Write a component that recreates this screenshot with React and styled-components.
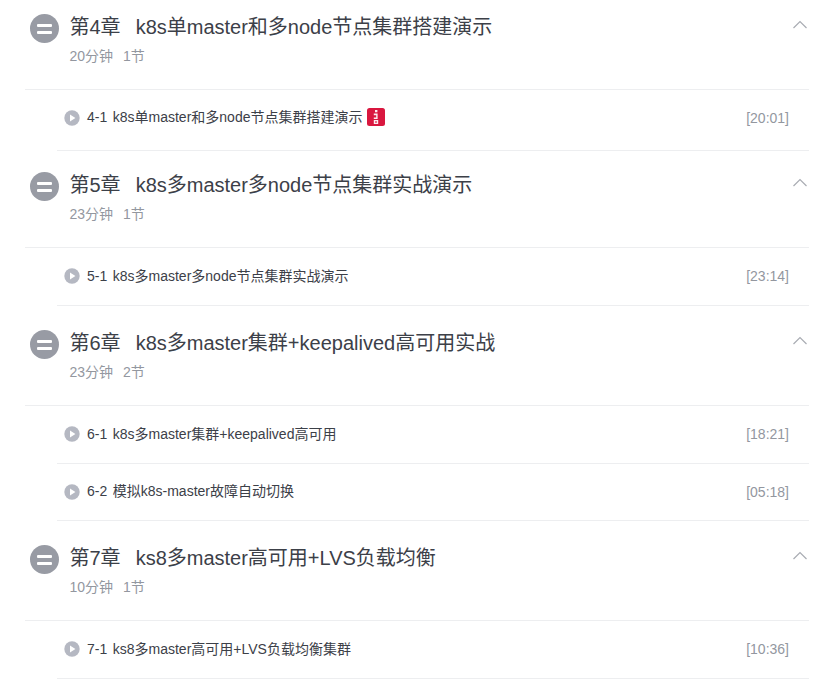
import React from "react";
import styled, { createGlobalStyle } from "styled-components";

const Global = createGlobalStyle`
  html, body { margin: 0; padding: 0; background: #fff; overflow: hidden; }
  body { font-family: "Liberation Sans", "Noto Sans CJK SC", sans-serif; }
`;
const Page = styled.div`
  width: 829px; height: 682px; overflow: hidden; box-sizing: border-box;
  padding: 0 20px 0 25px;
`;
const Chapter = styled.section``;
const Header = styled.header`
  display: flex; align-items: flex-start; box-sizing: content-box; height: 75px;
  padding-top: ${p => p.$top}px;
  border-bottom: 1px solid #edeef0;
`;
const Badge = styled.div`
  flex: none; width: 29px; height: 29px; margin: 0 10.5px 0 5px; border-radius: 50%;
  background: #989ba4; display: flex; flex-direction: column; align-items: center; justify-content: center; gap: 4px;
  &::before, &::after { content: ""; width: 15px; height: 3px; background: #fff; border-radius: 1px; }
`;
const Info = styled.div`flex: 1; min-width: 0;`;
const Title = styled.h3`
  margin: 0; font-weight: 400; font-size: 20px; line-height: 26px; color: #3c4048;
`;
const Num = styled.span`margin-right: 15px;`;
const Meta = styled.div`
  margin-top: 7px; font-size: 14px; line-height: 18px; color: #93979f;
  span { margin-right: 10px; }
`;
const Chevron = styled.svg`flex: none; width: 16px; height: 10px; margin: 6px 1px 0 0;`;
const Row = styled.div`
  display: flex; align-items: center; height: ${p => p.$h}px; box-sizing: border-box;
  margin-left: 32px; padding: 0 20px ${p => p.$pb}px 7px; border-bottom: 1px solid #edeef0;
`;
const Play = styled.svg`flex: none; width: 16px; height: 16px; margin-right: 7px;`;
const Lesson = styled.span`font-size: 14px; color: #3c4048; white-space: nowrap; margin-bottom: 3px;`;
const No = styled.span`margin-right: 5.5px;`;
const Tag = styled.svg`flex: none; width: 18px; height: 18px; margin: 0 0 1px 5px;`;
const Time = styled.span`margin-left: auto; font-size: 14px; color: #93979f;`;

const data = [
  { n: "第4章", t: "k8s单master和多node节点集群搭建演示", m: "20分钟", c: "1节", top: 14, l: [["4-1", "k8s单master和多node节点集群搭建演示", "[20:01]", true, 61, 5]] },
  { n: "第5章", t: "k8s多master多node节点集群实战演示", m: "23分钟", c: "1节", top: 21, l: [["5-1", "k8s多master多node节点集群实战演示", "[23:14]", false, 58, 1]] },
  { n: "第6章", t: "k8s多master集群+keepalived高可用实战", m: "23分钟", c: "2节", top: 24, l: [["6-1", "k8s多master集群+keepalived高可用", "[18:21]", false, 58, 1], ["6-2", "模拟k8s-master故障自动切换", "[05:18]", false, 57, 1]] },
  { n: "第7章", t: "ks8多master高可用+LVS负载均衡", m: "10分钟", c: "1节", top: 24, l: [["7-1", "ks8多master高可用+LVS负载均衡集群", "[10:36]", false, 58, 1]] },
];

export default function App() {
  return (
    <Page>
      <Global />
      {data.map(ch => (
        <Chapter key={ch.n}>
          <Header $top={ch.top}>
            <Badge />
            <Info>
              <Title><Num>{ch.n}</Num>{ch.t}</Title>
              <Meta><span>{ch.m}</span>{ch.c}</Meta>
            </Info>
            <Chevron viewBox="0 0 16 10"><path d="M1.5 8 8 1.5 14.5 8" fill="none" stroke="#a9acb3" strokeWidth="1.2" /></Chevron>
          </Header>
          {ch.l.map(([no, text, time, tag, h, pb]) => (
            <Row key={no} $h={h} $pb={pb}>
              <Play viewBox="0 0 16 16"><circle cx="8" cy="8" r="7.7" fill="#b5b8c2" /><path d="M6 4.6 11.4 8 6 11.4Z" fill="#fff" /></Play>
              <Lesson><No>{no}</No>{text}</Lesson>
              {tag && (
                <Tag viewBox="0 0 18 18">
                  <rect width="18" height="18" rx="2.5" fill="#d9173f" />
                  <path d="M8 2h2.4v2.2H8zM6.8 5.6h3.8v1.6H6.8zM9.2 7.2h1.4v2.4H9.2zM6.8 9.6h3.8v1.4H6.8zM6.8 12h4.4v4H6.8z" fill="#fff" opacity=".92" />
                  <rect x="8.2" y="13.3" width="1.6" height="1.4" fill="#d9173f" />
                </Tag>
              )}
              <Time>{time}</Time>
            </Row>
          ))}
        </Chapter>
      ))}
    </Page>
  );
}
